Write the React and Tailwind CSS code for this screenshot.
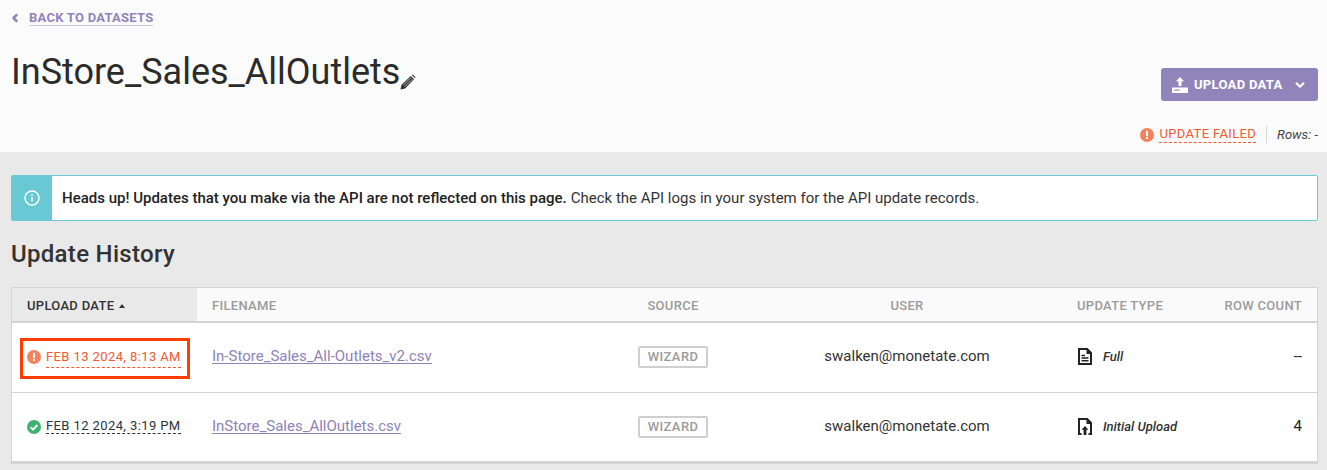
import React from "react";
import { ChevronLeft, ChevronDown } from "lucide-react";

const headCell = "mt-[2px] text-[13px] font-medium tracking-[0.3px] text-[#9b9b9b] uppercase";

const AlertDot = ({ className }) => (
  <svg viewBox="0 0 14 14" className={className}>
    <circle cx="7" cy="7" r="7" fill="#f5825f" />
    <rect x="6" y="2.8" width="2" height="5.2" rx="0.6" fill="#fff" />
    <circle cx="7" cy="10" r="1.15" fill="#fff" />
  </svg>
);

const CheckDot = () => (
  <svg viewBox="0 0 14 14" className="w-[14px] h-[14px] shrink-0">
    <circle cx="7" cy="7" r="7" fill="#3fb26f" />
    <path d="M3.6 7.2l2.4 2.4 4.4-4.6" fill="none" stroke="#fff" strokeWidth="1.9" />
  </svg>
);

const FileIcon = () => (
  <svg viewBox="0 0 14 17" className="w-[14px] h-[17px] shrink-0">
    <path d="M1 1h8l4 4v11H1z" fill="none" stroke="#222" strokeWidth="2" />
    <path d="M8.500 0.500h1.200l3.800 4v1.500H8.500z" fill="#222" />
    <path d="M3.500 7.500h3.500M3.500 10h7M3.500 12.700h7" stroke="#222" strokeWidth="1.400" />
  </svg>
);

const UploadFileIcon = () => (
  <svg viewBox="0 0 14 17" className="w-[14px] h-[17px] shrink-0">
    <path d="M3.500 16H1V1h8l4 4v11h-2.500" fill="none" stroke="#222" strokeWidth="2" />
    <path d="M8.500 0.500h1.200l3.800 4v1.500H8.500z" fill="#222" />
    <path d="M7 8l3.500 3.700H8.400V17H5.600v-5.300H3.500z" fill="#222" />
  </svg>
);

const UploadTray = () => (
  <svg viewBox="0 0 16 16" className="w-4 h-4 shrink-0">
    <path d="M8 0l4 4.200H9.500V9h-3V4.200H4z" fill="#fff" />
    <path d="M0 10.500h16V16H0z" fill="#fff" />
    <path d="M2.500 12.500h5v1.200h-5z" fill="#9184bb" />
  </svg>
);

const Pencil = () => (
  <svg viewBox="0 0 16 16" className="w-4 h-4 mt-[23px]">
    <path d="M0.500 15.500l1-4.700L10.800 2l3.200 3.200L5.200 14.500z" fill="#333" />
    <path d="M11.800 1l1-0.500 2.700 2.700-0.600 1z" fill="#333" />
    <path d="M3.300 11.200l7.500-7.500M4.800 12.700l7.500-7.500" stroke="#fbfbfb" strokeWidth="0.7" />
  </svg>
);

const rows = [
  {
    date: "Feb 13 2024, 8:13 AM",
    failed: true,
    file: "In-Store_Sales_All-Outlets_v2.csv",
    type: "Full",
    count: "--",
  },
  {
    date: "Feb 12 2024, 3:19 PM",
    failed: false,
    file: "InStore_Sales_AllOutlets.csv",
    type: "Initial Upload",
    count: "4",
  },
];

const Row = ({ row, last }) => (
  <div className={`relative flex items-center bg-white ${last ? "h-[68px] pb-[1px]" : "h-[70px] pb-[2px] border-b border-[#d4d4d4]"}`}>
    <div className="w-[185px] pl-[15px] flex items-center gap-[5px]">
      {row.failed ? <AlertDot className="w-[14px] h-[14px] shrink-0" /> : <CheckDot />}
      <span
        className={`text-[13px] tracking-[0.4px] uppercase border-b border-dashed whitespace-nowrap ${
          row.failed
            ? "leading-[17px] pb-[2px] mt-[2px] text-[#f2592f] border-[#f2592f]"
            : "leading-[14px] text-[#2a3440] border-[#2a3440]"
        }`}
      >
        {row.date}
      </span>
    </div>
    <div className="w-[401px] pl-[15px] text-[15px] text-[#8e82b8] underline underline-offset-2">
      {row.file}
    </div>
    <div className="w-[150px] flex justify-center">
      <span className="w-[70px] h-[22px] mt-[1px] flex items-center justify-center border-2 border-[#cfcfcf] rounded-[2px] text-[13px] font-medium tracking-[0.4px] text-[#9b9b9b]">
        WIZARD
      </span>
    </div>
    <div className="w-[318px] text-center text-[15px] text-[#333]">swalken@monetate.com</div>
    <div className="w-[134px] pl-[12px] flex items-center gap-[11px] text-[13px] font-medium italic text-[#333]">
      {row.failed ? <FileIcon /> : <UploadFileIcon />}
      <span className="whitespace-nowrap">{row.type}</span>
    </div>
    <div className="flex-1 pr-[15px] text-right text-[15px] text-[#222]">{row.count}</div>
    {row.failed && (
      <div className="absolute left-[8px] top-[15px] w-[170px] h-[41px] border-[3px] border-[#ff3d00]" />
    )}
  </div>
);

export default function App() {
  return (
    <div className="h-[470px] overflow-hidden bg-[#e9e9e9] font-['Roboto',sans-serif] text-[#2b2b2b]">
      <header className="h-[152px] bg-[#fbfbfb] px-[9px] pt-[10px]">
        <a className="flex items-center gap-[8px] text-[#9184bb] text-[13px] font-bold tracking-[0.25px]">
          <ChevronLeft size={12} strokeWidth={5} />
          <span className="border-b border-[#cbc5e0] leading-[15px]">BACK TO DATASETS</span>
        </a>
        <div className="flex justify-between">
          <div className="flex items-start pl-[2px] pt-[25px]">
            <h1 className="text-[36px] leading-[42px] font-normal text-[#2b2b2b]">InStore_Sales_AllOutlets</h1>
            <Pencil />
          </div>
          <div className="flex flex-col items-end pt-[42px]">
            <button className="w-[157px] h-[33px] rounded-[3px] bg-[#9184bb] text-white text-[13px] font-bold tracking-[0.3px] flex items-center pl-[11px] gap-[6px]">
              <UploadTray />
              <span>UPLOAD DATA</span>
              <ChevronDown size={14} strokeWidth={3.5} className="ml-[4px]" />
            </button>
            <div className="flex items-center mt-[24px]">
              <AlertDot className="w-[14px] h-[14px] mr-[5px]" />
              <span className="text-[13px] leading-[16px] tracking-[0.35px] text-[#f2592f] border-b border-dashed border-[#f2592f]">
                UPDATE FAILED
              </span>
              <span className="h-[17px] w-px bg-[#d4d4d4] mx-[10px]" />
              <span className="text-[13px] text-[#444]">
                <i>Rows:</i> -
              </span>
            </div>
          </div>
        </div>
      </header>

      <main className="px-[11px] pt-[23px] pr-[9px]">
        <div className="flex h-[46px] border border-[#68c8d3] rounded-[2px] bg-white">
          <div className="w-[40px] bg-[#68c8d3] flex items-center justify-center">
            <svg viewBox="0 0 16 16" className="w-4 h-4">
              <circle cx="8" cy="8" r="7" fill="none" stroke="#fff" strokeWidth="1.400" />
              <rect x="7.200" y="7" width="1.600" height="4.500" fill="#fff" />
              <rect x="7.200" y="4.300" width="1.600" height="1.600" fill="#fff" />
            </svg>
          </div>
          <p className="pl-[10px] flex items-center text-[15px] text-[#333]">
            <strong className="font-medium text-[#222] mr-1">
              Heads up! Updates that you make via the API are not reflected on this page.
            </strong>
            Check the API logs in your system for the API update records.
          </p>
        </div>

        <h2 className="mt-[17px] text-[24px] leading-[32px] tracking-[0.3px] font-medium text-[#333]">Update History</h2>

        <div className="mt-[17px] border-x border-t border-[#d4d4d4]">
          <div className="flex items-center h-[35px] bg-[#fafafa] border-b-2 border-[#d4d4d4]">
            <div className="w-[185px] self-stretch pt-[2px] pl-[15px] bg-[#e9e9e9] flex items-center gap-[5px] text-[13px] font-medium tracking-[0.3px] text-[#333]">
              UPLOAD DATE
              <svg viewBox="0 0 6 4" className="w-[6px] h-[4px]">
                <path d="M3 0l3 4H0z" fill="#333" />
              </svg>
            </div>
            <div className={`w-[401px] pl-[15px] ${headCell}`}>Filename</div>
            <div className={`w-[150px] text-center ${headCell}`}>Source</div>
            <div className={`w-[318px] text-center ${headCell}`}>User</div>
            <div className={`w-[134px] pl-[11px] ${headCell}`}>Update Type</div>
            <div className={`flex-1 pr-[15px] text-right ${headCell}`}>Row Count</div>
          </div>
          {rows.map((row, i) => (
            <Row key={row.date} row={row} last={i === rows.length - 1} />
          ))}
        </div>
        <div className="h-[3px] bg-[#d4d4d4]" />
      </main>
    </div>
  );
}
